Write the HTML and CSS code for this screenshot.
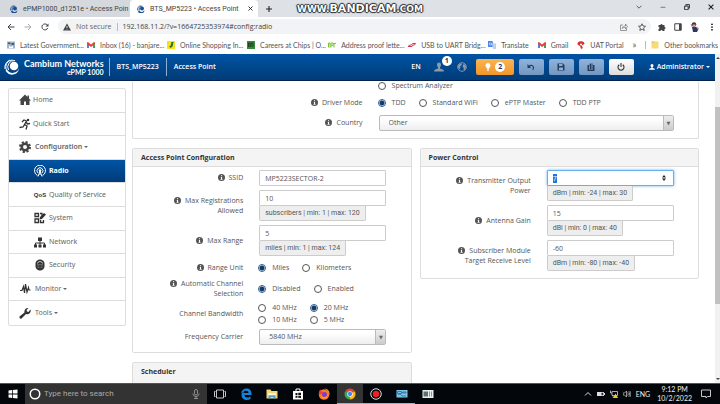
FILE: index.html
```html
<!doctype html>
<html lang="en">
<head>
<meta charset="utf-8">
<meta name="viewport" content="width=device-width">
<title>BTS_MP5223 • Access Point</title>
<link rel="stylesheet" href="styles.css">
</head>
<body>
<svg class="defs" aria-hidden="true">
  <symbol id="info" viewBox="0 0 14 14"><circle cx="7" cy="7" r="7" fill="#555"/><path d="M5.4 5.8h2.8v4.4h1v1.3H5v-1.3h1V7h-.6zM6 2.4h2.2v2H6z" fill="#fff"/></symbol>
  <symbol id="cam" viewBox="0 0 16 16"><path d="M4 11a6 6 0 0 0 11-2 7 7 0 0 1-12 5 8 8 0 0 0 12-2A7 7 0 0 1 2 13z" fill="#1a4f94"/><circle cx="10" cy="7" r="4" fill="#1a4f94"/><path d="M1.500 11a8 8 0 0 1 6-9.500M4.500 11a7 7 0 0 1 6-9" fill="none" stroke="#1a4f94" stroke-width="1.800"/></symbol>
  <symbol id="gm" viewBox="0 0 16 12"><path d="M0 12V1l4 3v8z" fill="#4285f4"/><path d="M16 12V1l-4 3v8z" fill="#34a853"/><path d="M0 1l2-1 6 5 6-5 2 1v3L8 10 0 4z" fill="#ea4335"/></symbol>
  <symbol id="x" viewBox="0 0 10 10"><path d="M1 1l8 8M9 1L1 9" stroke="#222" stroke-width="1.800"/></symbol>
</svg>

<div class="tabs">
  <div class="tab"><svg class="i8"><use href="#cam"/></svg><span class="ttl">ePMP1000_d1251e • Access Poin</span><button aria-label="Close tab"><svg class="i5"><use href="#x"/></svg></button></div>
  <div class="tab on"><svg class="i8"><use href="#cam"/></svg><span class="ttl">BTS_MP5223 • Access Point</span><button aria-label="Close tab"><svg class="i5"><use href="#x"/></svg></button></div>
  <button class="plus" aria-label="New tab"><svg class="i6" viewBox="0 0 10 10"><path d="M5 0v10M0 5h10" stroke="#222" stroke-width="1.800"/></svg></button>
  <div class="win">
    <button aria-label="Search tabs"><svg class="i6" viewBox="0 0 10 10"><path d="M1 3l4 4 4-4" fill="none" stroke="#444" stroke-width="1.400"/></svg></button>
    <button aria-label="Minimize"><svg class="i6" viewBox="0 0 10 10"><path d="M1 5.500h8" stroke="#555" stroke-width="1.200"/></svg></button>
    <button aria-label="Restore"><svg class="i6" viewBox="0 0 10 10"><path d="M1 3.500h6v6H1zM3 3V1h6v6H7.500" fill="none" stroke="#222" stroke-width="1.500"/></svg></button>
    <button aria-label="Close"><svg class="i6"><use href="#x"/></svg></button>
  </div>
  <div class="mark">www.<b>BANDICAM</b>.com</div>
</div>

<div class="tools">
  <button aria-label="Back"><svg class="i8" viewBox="0 0 16 16"><path d="M15 8H2M8 2L2 8l6 6" fill="none" stroke="#444" stroke-width="2"/></svg></button>
  <button aria-label="Forward"><svg class="i8" viewBox="0 0 16 16"><path d="M1 8h13M8 2l6 6-6 6" fill="none" stroke="#aaa" stroke-width="2"/></svg></button>
  <button aria-label="Reload"><svg class="i8" viewBox="0 0 16 16"><path d="M13.500 10A6 6 0 1 1 12.500 4" fill="none" stroke="#444" stroke-width="2"/><path d="M15 1v6H9z" fill="#444"/></svg></button>
  <div class="omni">
    <svg class="i8" viewBox="0 0 16 16"><path d="M8 1l8 14H0z" fill="#444"/><path d="M7.200 6h1.600v4H7.200zM7.200 11.500h1.600V13H7.200z" fill="#fff"/></svg>
    <span class="ns">Not secure</span><span class="bar"></span>
    <input class="url" aria-label="Address" value="192.168.11.2/?v=1664725353974#config:radio">
    <button aria-label="Share"><svg class="i8" viewBox="0 0 16 16"><path d="M6 4H1v11h12v-4M4 11c1-4 4-5 7-5V2l4 5-4 5V9c-3 0-5 0-7 2z" fill="none" stroke="#666" stroke-width="1.300"/></svg></button>
    <button aria-label="Bookmark"><svg class="i8" viewBox="0 0 16 16"><path d="M8 1.500l2 4.500 5 .5-3.700 3.300L12.400 15 8 12.200 3.600 15l1.100-5.200L1 6.500 6 6z" fill="none" stroke="#333" stroke-width="1.500"/></svg></button>
  </div>
  <div class="ext">
    <button aria-label="Extensions"><svg class="i8" viewBox="0 0 16 16"><path d="M1 4h4a2 2 0 1 1 4 0h4v4a2 2 0 1 1 0 4v4H9a2 2 0 1 0-4 0H1v-4a2 2 0 1 0 0-4z" fill="#444"/></svg></button>
    <button aria-label="Side panel"><svg class="i8" viewBox="0 0 16 16"><path d="M1.500 1.500h13v13h-13z" fill="none" stroke="#444" stroke-width="2"/><path d="M10 2h4v12h-4z" fill="#444"/></svg></button>
    <button aria-label="Profile"><svg class="i10" viewBox="0 0 20 20"><circle cx="8" cy="5" r="4.500" fill="#433"/><path d="M5 5h6v4H6z" fill="#d9a08c"/><path d="M4 10h9l4 4-3 6H6z" fill="#2b3566"/><path d="M12 9l6 3-2 4z" fill="#c98"/><path d="M1 3l4 3-1 5z" fill="#b57"/></svg></button>
    <button aria-label="Menu"><svg class="i8" viewBox="0 0 16 16"><circle cx="8" cy="2.500" r="1.700"/><circle cx="8" cy="8" r="1.700"/><circle cx="8" cy="13.500" r="1.700"/></svg></button>
  </div>
</div>

<nav class="marks">
  <a href="#" class="cut"><svg class="i8" viewBox="0 0 16 16"><path d="M0 1h16v14H0z" fill="#9eb2c8"/><path d="M2 3h5v3H2zM9 4h5v4H9z" fill="#445a7c"/><path d="M4 9l4 3 4-3v5H4z" fill="#fff"/></svg><span>Latest Government...</span></a>
  <a href="#" class="cut"><svg class="i8"><use href="#gm"/></svg><span>Inbox (16) - banjare...</span></a>
  <a href="#" class="cut"><svg class="i8" viewBox="0 0 16 16"><path d="M0 0h16v16H0z" fill="#f5e11c"/><path d="M9 2l-2 8H4l3 4 4-3 2-9z" fill="#26702e"/></svg><span>Online Shopping In...</span></a>
  <a href="#" class="cut"><svg class="i8" viewBox="0 0 16 16"><path d="M0 0h16v16H0z" fill="#37883b"/><path d="M3 12V4h3v8M8 12V4h4v8" fill="none" stroke="#10330f" stroke-width="1.500"/></svg><span>Careers at Chips | O...</span></a>
  <a href="#" class="cut"><svg class="i8" viewBox="0 0 16 16"><path d="M1 13V4h3v9M6 13V4h4v5H7M12 4v9M11 5h5" fill="none" stroke="#7dc52c" stroke-width="2"/></svg><span>Address proof lette...</span></a>
  <a href="#" class="cut"><svg class="i8" viewBox="0 0 16 16"><path d="M0 11l4-3h3l2-3h6l-2 3h-3l-2 3z" fill="none" stroke="#c32a35" stroke-width="1.800"/></svg><span>USB to UART Bridg...</span></a>
  <a href="#"><svg class="i8" viewBox="0 0 16 16"><path d="M0 0h9l3 12H0z" fill="#4a86e8"/><path d="M8 5h8v11H10z" fill="#c3cfe4"/><path d="M3 4h4v4H3z" fill="none" stroke="#fff"/></svg>Translate</a>
  <a href="#"><svg class="i8"><use href="#gm"/></svg>Gmail</a>
  <a href="#"><svg class="i8" viewBox="0 0 16 16"><path d="M1 7a7 6 0 0 1 14-1L9 9l3 5-4 2-2-6z" fill="#d32f2f"/><circle cx="8" cy="7" r="2" fill="#fff"/></svg>UAT Portal</a>
  <button class="more" aria-label="More bookmarks">»</button><span class="bar"></span>
  <a href="#" class="other"><svg class="i8" viewBox="0 0 16 16"><path d="M1 1h14v14H1z" fill="#f7d978"/><path d="M1 1h6v2H1z" fill="#e6bd4d"/></svg>Other bookmarks</a>
</nav>

<div class="page">
<div class="view">
<header class="top">
  <a class="logo" href="#">
    <svg class="i16" viewBox="0 0 32 32"><circle cx="20" cy="14" r="8.500" fill="#fff"/><path d="M6 21a13 13 0 0 0 24-3 14 14 0 0 1-25 8l-2-3z" fill="#fff"/><path d="M22 3A13 13 0 0 0 9 22M17 2A14 14 0 0 0 5 22M12 2A16 16 0 0 0 2 20" fill="none" stroke="#fff" stroke-width="2"/></svg>
    <span class="brand">Cambium Networks<small>ePMP 1000</small></span>
  </a>
  <span class="cell">BTS_MP5223</span>
  <span class="cell">Access Point</span>
  <div class="right">
    <a href="#" class="lang">EN</a>
    <a href="#" class="user" aria-label="Users"><svg class="i10" viewBox="0 0 20 20"><path d="M6 5a4 4 0 0 1 8 0c0 3-1 4-2 6v2c4 1 8 2 8 6H0c0-4 4-5 8-6v-2C7 9 6 8 6 5z" fill="#8c9aab"/></svg><span class="badge">1</span></a>
    <a href="#" class="globe" aria-label="Internet"><svg class="i10" viewBox="0 0 20 20"><circle cx="10" cy="10" r="8.500" fill="none" stroke="#8c9aab" stroke-width="2"/><path d="M2 8l3-4 5-1-1 4-3 1 1 3-2 3-3-3zM13 4l4 2 1 5-3 5-2-1v-4l-2-2z" fill="#8c9aab"/></svg></a>
    <button class="btn warn" aria-label="Notifications"><svg class="i8" viewBox="0 0 16 16"><path d="M8 0a5 5 0 0 1 3 9l-1 3H6L5 9a5 5 0 0 1 3-9zM6 13h4v1l-1 2H7l-1-2z" fill="#fff"/></svg><span class="num">2</span></button>
    <button class="btn" aria-label="Undo"><svg class="i8" viewBox="0 0 16 16"><path d="M4 7c4-4 9-2 9 2 0 2-1 4-2 4" fill="none" stroke="#253d5d" stroke-width="2.400"/><path d="M1 2v8h7z" fill="#253d5d"/></svg></button>
    <button class="btn" aria-label="Save"><svg class="i8" viewBox="0 0 16 16"><path d="M1 1h11l3 3v11H1z" fill="#253d5d"/><path d="M4 2h7v4H4zM4 9h8v5H4z" fill="#8eb0d6"/></svg></button>
    <button class="btn" aria-label="Reset"><svg class="i8" viewBox="0 0 16 16"><path d="M1 4h3v9h8V4h3v12H1zM5 3l3-3v12H6zM9 1h2v11H9z" fill="#253d5d"/></svg></button>
    <button class="btn pow" aria-label="Reboot"><svg class="i8" viewBox="0 0 16 16"><path d="M4.500 3.500a6 6 0 1 0 7 0M8 0v8" fill="none" stroke="#333" stroke-width="2.200"/></svg></button>
    <a href="#" class="admin"><svg class="i6" viewBox="0 0 20 20"><path d="M5 5a5 5 0 0 1 10 0c0 3-1 5-3 6v2c4 1 8 2 8 6H0c0-4 4-5 8-6v-2C6 10 5 8 5 5z" fill="#fff"/></svg>Administrator<i class="caret"></i></a>
  </div>
</header>

<div class="cols">
<nav class="side">
  <a href="#"><svg class="i12" viewBox="0 0 24 24"><path d="M12 1L0 13h3v9h7v-7h4v7h7v-9h3l-4-4V3h-3v3z" fill="#444"/></svg>Home</a>
  <a href="#"><svg class="i12" viewBox="0 0 24 24"><circle cx="18" cy="4" r="2.500" fill="#333"/><path d="M6 8l4-4 5 2-4 7 5 3-2 7M11 13l-3 5-7 1M14 8l3 4 5-1" fill="none" stroke="#333" stroke-width="2.600"/></svg>Quick Start</a>
  <a href="#" class="grp"><svg class="i12" viewBox="0 0 24 24"><circle cx="12" cy="12" r="6.500" fill="none" stroke="#444" stroke-width="5"/><circle cx="12" cy="12" r="10" fill="none" stroke="#444" stroke-width="4" stroke-dasharray="4.200 3.654"/></svg><b>Configuration</b><i class="caret"></i></a>
  <a href="#" class="sub on"><svg class="i12" viewBox="0 0 24 24"><g fill="none" stroke="#fff" stroke-width="2"><path d="M7 21a11 11 0 1 1 10 0M8 16a6 6 0 1 1 8 0M12 12L8 23M12 12l4 11M10 18h4"/></g><circle cx="12" cy="11" r="2.500" fill="#fff"/></svg>Radio</a>
  <a href="#" class="sub"><strong class="qos">QoS</strong>Quality of Service</a>
  <a href="#" class="sub"><svg class="i12" viewBox="0 0 24 24"><path d="M2 3h7v6H2zM2 14h7v7H2zM12 3h4v5M13 16v5h6v-5" fill="none" stroke="#333" stroke-width="2.600"/><path d="M11 15l1-5 8-8 4 3-8 9z" fill="#333"/></svg>System</a>
  <a href="#" class="sub"><svg class="i12" viewBox="0 0 24 24"><path d="M8 3h8v7H8zM0 17h6v6H0zM9 17h6v6H9zM18 17h6v6h-6z" fill="#333"/><path d="M12 9v8M3 18v-4h18v4" fill="none" stroke="#333" stroke-width="2"/></svg>Network</a>
  <a href="#" class="sub"><svg class="i12" viewBox="0 0 24 24"><path d="M3 9a9 8 0 0 1 18 0v6a9 8 0 0 1-18 0z" fill="#333"/><path d="M7 9a5 4 0 0 1 10 0" fill="none" stroke="#eee" stroke-width="1.500"/><path d="M6 11h12M6 14h5m2 0h5M7 17h4m2 0h4" stroke="#999" stroke-width="1"/></svg>Security</a>
  <a href="#" class="grp"><svg class="i12" viewBox="0 0 24 24"><path d="M2 15h4l3-8 2 13 2-18 3 16 3-9 1 5h3" fill="none" stroke="#333" stroke-width="2.400"/></svg>Monitor<i class="caret"></i></a>
  <a href="#" class="grp"><svg class="i12" viewBox="0 0 24 24"><path d="M23 5a7 7 0 0 1-9 9L5 23c-2 2-5-1-4-4l10-8c-1-6 3-10 8-9l-4 4 1 3 3 1z" fill="#333"/></svg>Tools<i class="caret"></i></a>
</nav>

<form class="main">
  <section class="card wide">
    <div class="row">
      <span></span>
      <div class="opts"><label><input type="radio" name="mode">Spectrum Analyzer</label></div>
    </div>
    <div class="row tall">
      <span class="lab"><svg class="i7"><use href="#info"/></svg>Driver Mode</span>
      <div class="opts">
        <label><input type="radio" name="driver" checked>TDD</label>
        <label><input type="radio" name="driver">Standard WiFi</label>
        <label><input type="radio" name="driver">ePTP Master</label>
        <label><input type="radio" name="driver">TDD PTP</label>
      </div>
    </div>
    <div class="row">
      <label class="lab" for="country"><svg class="i7"><use href="#info"/></svg>Country</label>
      <div class="sel"><select id="country"><option>Other</option></select></div>
    </div>
  </section>

  <section class="card">
    <h2>Access Point Configuration</h2>
    <div class="body">
      <div class="row">
        <label class="lab" for="ssid"><svg class="i7"><use href="#info"/></svg>SSID</label>
        <div><input class="txt" id="ssid" value="MP5223SECTOR-2"></div>
      </div>
      <div class="row">
        <label class="lab" for="maxreg"><svg class="i7"><use href="#info"/></svg>Max Registrations<br>Allowed</label>
        <div><input class="txt" id="maxreg" value="10"><span class="hint">subscribers | min: 1 | max: 120</span></div>
      </div>
      <div class="row">
        <label class="lab" for="range"><svg class="i7"><use href="#info"/></svg>Max Range</label>
        <div><input class="txt" id="range" value="5"><span class="hint">miles | min: 1 | max: 124</span></div>
      </div>
      <div class="row mid">
        <span class="lab"><svg class="i7"><use href="#info"/></svg>Range Unit</span>
        <div class="opts">
          <label><input type="radio" name="unit" checked>Miles</label>
          <label><input type="radio" name="unit">Kilometers</label>
        </div>
      </div>
      <div class="row">
        <span class="lab"><svg class="i7"><use href="#info"/></svg>Automatic Channel<br>Selection</span>
        <div class="opts">
          <label><input type="radio" name="acs" checked>Disabled</label>
          <label><input type="radio" name="acs">Enabled</label>
        </div>
      </div>
      <div class="row">
        <span class="lab">Channel Bandwidth</span>
        <div class="opts pairs">
          <label><input type="radio" name="bw">40 MHz</label>
          <label><input type="radio" name="bw" checked>20 MHz</label>
          <label><input type="radio" name="bw">10 MHz</label>
          <label><input type="radio" name="bw">5 MHz</label>
        </div>
      </div>
      <div class="row">
        <label class="lab" for="freq">Frequency Carrier</label>
        <div class="sel"><select id="freq"><option>5840 MHz</option></select></div>
      </div>
    </div>
  </section>

  <section class="card">
    <h2>Power Control</h2>
    <div class="body">
      <div class="row">
        <label class="lab" for="power"><svg class="i7"><use href="#info"/></svg>Transmitter Output<br>Power</label>
        <div class="spin"><input class="txt act" id="power" type="number" min="-24" max="30" value="7"><svg class="i6" viewBox="0 0 12 12"><path d="M6 0l4 5H2zM6 12l4-5H2z" fill="#222"/></svg><span class="hint">dBm | min: -24 | max: 30</span></div>
      </div>
      <div class="row">
        <label class="lab" for="gain"><svg class="i7"><use href="#info"/></svg>Antenna Gain</label>
        <div><input class="txt" id="gain" value="15"><span class="hint">dBi | min: 0 | max: 40</span></div>
      </div>
      <div class="row">
        <label class="lab" for="level"><svg class="i7"><use href="#info"/></svg>Subscriber Module<br>Target Receive Level</label>
        <div><input class="txt" id="level" value="-60"><span class="hint">dBm | min: -80 | max: -40</span></div>
      </div>
    </div>
  </section>

  <section class="card sched"><h2>Scheduler</h2></section>
</form>
</div>
</div>
<div class="scroll"><i class="up"></i><div class="thumb"></div><i class="dn"></i></div>
</div>

<footer class="task">
  <button class="start" aria-label="Start"><svg class="i10" viewBox="0 0 20 20"><path d="M1 3l7-1v7H1zM9.500 2L19 1v8H9.500zM1 11h7v7l-7-1zM9.500 11H19v8l-9.500-1z" fill="#fff"/></svg></button>
  <div class="find">
    <svg class="i12" viewBox="0 0 24 24"><circle cx="12" cy="12" r="9.500" fill="none" stroke="#fff" stroke-width="3"/></svg>
    <input aria-label="Search" placeholder="Type here to search">
    <svg class="i10" viewBox="0 0 20 20"><rect x="7" y="1" width="6" height="11" rx="3" fill="none" stroke="#aaa" stroke-width="1.500"/><path d="M4 9c0 8 12 8 12 0M10 15v4M6 19h8" fill="none" stroke="#aaa" stroke-width="1.500"/></svg>
  </div>
  <div class="apps">
    <button aria-label="Task view"><svg class="i12" viewBox="0 0 24 24"><path d="M5 4h14v16H5zM3 7H1v10h2M21 7h2v10h-2" fill="none" stroke="#ddd" stroke-width="1.800"/></svg></button>
    <button aria-label="Edge"><svg class="i12" viewBox="0 0 24 24"><path d="M2 11C3 4 8 1 13 1c6 0 10 4 10 10v3H9c0 6 8 6 12 3v5c-7 4-18 2-18-8 0-4 3-7 6-8-1 1-2 3-2 4h10c0-6-10-6-15 1z" fill="#1683d8"/></svg></button>
    <button aria-label="Explorer"><svg class="i12" viewBox="0 0 24 24"><path d="M1 3h8l2 3h12v15H1z" fill="#f4d67a"/><path d="M4 10h16v4H4z" fill="#fff3c4"/><path d="M5 21v-6h14v6h-4v-3H9v3z" fill="#4b9fd8"/></svg></button>
    <button aria-label="Store"><svg class="i12" viewBox="0 0 24 24"><path d="M2 6h20v17H2z" fill="#fff"/><path d="M8 6V2h8v4" fill="none" stroke="#fff" stroke-width="2"/><path d="M7 10h4v4H7zM12.500 9.500H18V14h-5.500zM7 15.500h4v4H7zM12.500 15.500H18V20l-5.500-.5z" fill="#111"/></svg></button>
    <button aria-label="Firefox"><svg class="i12" viewBox="0 0 24 24"><circle cx="12" cy="13" r="10.500" fill="#ff7a1f"/><path d="M13 1c6 3 10 7 9 14a10 10 0 0 0-9-14z" fill="#ffc629"/><path d="M2 14C1 8 3 5 5 3l2 4 4 1-2 3z" fill="#f2443b"/><circle cx="13" cy="13" r="5" fill="#7a3ed1"/><path d="M6 15c3 6 11 5 13-1 0 7-12 10-13 1z" fill="#ffb52b"/></svg></button>
    <button class="cur run" aria-label="Chrome"><svg class="i12" viewBox="0 0 24 24"><path d="M12 12L2.500 6.500A11 11 0 0 1 21.500 6.500z" fill="#e94335"/><path d="M12 12l9.500-5.500A11 11 0 0 1 12 23z" fill="#fbbc05"/><path d="M12 12v11A11 11 0 0 1 2.500 6.500z" fill="#34a853"/><path d="M12 6.500h9.500L12 12z" fill="#e94335"/><circle cx="12" cy="12" r="5.500" fill="#fff"/><circle cx="12" cy="12" r="4.300" fill="#4285f4"/></svg></button>
    <button class="run" aria-label="Bandicam"><svg class="i12" viewBox="0 0 24 24"><circle cx="12" cy="12" r="10.500" fill="none" stroke="#ddd" stroke-width="2"/><circle cx="12" cy="12" r="6.500" fill="#f01f24"/></svg></button>
    <button class="run" aria-label="Network tool"><svg class="i12" viewBox="0 0 24 24"><path d="M1 4h22v15H1z" fill="#7cc5ea"/><path d="M3 7h8v4H3zM13 8h7v2h-7zM4 14l4-2 4 4h8" fill="none" stroke="#24618b" stroke-width="1.500"/></svg></button>
    <button aria-label="Control panel"><svg class="i12" viewBox="0 0 24 24"><path d="M1 4h22v16H1z" fill="#e8eeee"/><path d="M3 7h9v10H3z" fill="#58736c"/><path d="M15 7v10M19 7v10" stroke="#7c9aa6" stroke-width="2"/></svg></button>
  </div>
  <div class="tray">
    <svg class="i8" viewBox="0 0 16 16"><path d="M2 11l6-6 6 6" fill="none" stroke="#ddd" stroke-width="2"/></svg>
    <svg class="i8" viewBox="0 0 16 16"><path d="M0 4h14v8H0zM14 6h2v4h-2z" fill="#ddd"/><path d="M9 5.500h3.500v5H9z" fill="#222"/></svg>
    <svg class="i8" viewBox="0 0 16 16"><path d="M1 1v5h3M4 3h11v8H4zM5 14h5" fill="none" stroke="#ddd" stroke-width="1.500"/><path d="M11 7l5 9H6z" fill="#f8c62d"/></svg>
    <svg class="i8" viewBox="0 0 16 16"><path d="M0 6h3l4-4v12l-4-4H0zM9 5c2 2 2 4 0 6M11 3c3 3 3 7 0 10M13.500 2c3 4 3 8 0 12" fill="none" stroke="#ddd" stroke-width="1.300"/></svg>
    <span>ENG</span>
    <time>9:12 PM<br>10/2/2022</time>
    <svg class="i10" viewBox="0 0 20 20"><path d="M1 2h18v13h-6l-3 3v-3H1z" fill="none" stroke="#ddd" stroke-width="1.800"/></svg>
  </div>
</footer>
<script>
document.getElementById("power").focus();
document.getElementById("power").select();
</script>
</body>
</html>
```
FILE: styles.css
```css
*{box-sizing:border-box}
html,body{height:100%}
body{margin:0; display:flex; flex-direction:column; overflow:hidden; background:#fff; color:#555; font:7px/10px "Open Sans","Noto Sans",sans-serif}
a{color:inherit; text-decoration:none}
button{margin:0; padding:0; border:0; background:none; font:inherit; color:inherit; display:flex; align-items:center; justify-content:center}
input,select{font:inherit; color:inherit; margin:0}
svg{display:block; flex:none}
.defs{position:absolute; width:0; height:0}
.i5{width:5px; height:5px}
.i6{width:6px; height:6px}
.i7{width:7px; height:7px}
.i8{width:8px; height:8px}
.i10{width:10px; height:10px}
.i12{width:12px; height:12px}
.i16{width:16px; height:16px}
.bar{width:1px; height:8px; background:#bbb}
.caret{display:inline-block; border:2px solid transparent; border-top-color:currentColor; border-bottom:0}

/* browser */
.tabs,.find,.hint{font-family:Roboto,sans-serif}
.marks,.tray{font-family:Lato,sans-serif}
.tabs{position:relative; display:flex; align-items:stretch; height:17px; flex:none; background:#dee1e6; color:#444}
.tab{display:flex; align-items:center; gap:5px; width:130px; padding:0 5px 0 10px; background:#d5d8dd}
.tab.on{width:128px; padding-left:7px; background:#fff; border-radius:4px 4px 0 0}
.ttl{flex:1; white-space:nowrap}
.plus{width:22px}
.win{display:flex; gap:18px; margin-left:auto; padding-right:6px; padding-bottom:3px}
.mark{position:absolute; left:50%; top:2px; transform:translateX(-50%); font:bold 9px/13px "DejaVu Sans",sans-serif; color:#fff; text-transform:uppercase; text-shadow:0 0 1px #222,0 0 1px #222,1px 0 1px #333,-1px 0 1px #333,0 1px 1px #333,0 -1px 1px #333}
.mark b{font-size:11px}
.tools{display:flex; align-items:center; gap:9px; height:19px; flex:none; padding:0 4px 0 7px; background:#fff}
.omni{flex:1; display:flex; align-items:center; gap:5px; height:15px; padding:0 5px; border-radius:8px; background:#f1f3f4}
.omni button{margin-left:5px}
.ns{color:#666}
.url{flex:1; min-width:0; border:0; padding:0; background:none; color:#444; outline:0}
.ext{display:flex; align-items:center; gap:8px; margin-left:-2px}
.marks{display:flex; align-items:center; gap:9px; height:18px; flex:none; padding:0 2px 0 7px; white-space:nowrap}
.marks a{display:flex; align-items:center; gap:5px}
.marks .cut{min-width:71px}
.more{margin-left:auto; font-size:9px}
.marks .bar{margin-right:-4px}

.page{flex:1; min-height:0; display:flex}
.view{flex:1; min-width:0; overflow:hidden}
.scroll{width:5px; display:flex; flex-direction:column; justify-content:space-between; align-items:center; padding:3px 0; background:#f1f1f1}
.thumb{width:100%; height:61%; margin-bottom:26px; background:#c1c1c1}
.scroll i{border:2px solid transparent}
.scroll .up{border-bottom-color:#444; border-top:0}
.scroll .dn{border-top-color:#444; border-bottom:0}

/* app header */
.top{display:flex; align-items:center; height:27px; padding:0 5px 0 4px; background:linear-gradient(#0054a4,#003b78); border-bottom:1px solid #00224d; color:#fff; font-weight:600}
.logo{display:flex; align-items:center; gap:4px; padding-right:5px}
.brand{font:bold 9px/9px Lato,sans-serif; text-align:right}
.brand small{display:block; font-size:7px; line-height:8px}
.cell{border-left:1px solid #8fb0d4; padding:4px 7px}
.right{display:flex; align-items:center; gap:5px; margin-left:auto}
.lang,.user{margin-right:8px}
.user{position:relative}
.badge,.num{min-width:10px; height:10px; border-radius:5px; background:#fff; color:#1b3a63; text-align:center; font-weight:700}
.badge{position:absolute; left:8px; top:-6px}
.globe{margin-right:4px}
.btn{width:25px; height:16px; border-radius:2px; background:linear-gradient(#8fb3da,#7397c0)}
.warn{width:38px; gap:3px; background:linear-gradient(#fbb450,#f2962a)}
.pow{background:linear-gradient(#fff,#ddd)}
.admin{display:flex; align-items:center; gap:2px; margin-left:10px}

.cols{display:grid; grid-template-columns:118px minmax(0,1fr); gap:6px; align-items:start; padding:0 16px 0 8px}
.side{display:grid; grid-auto-rows:1fr; min-height:238px; margin-top:7px; border:1px solid #ddd; border-radius:2px; color:#666; font-family:"Noto Sans",sans-serif}
.side a{display:flex; align-items:center; gap:2px; padding-left:10px; border-bottom:1px solid #ddd}
.side a:last-child{border-bottom:0}
.side .grp svg{margin-right:2px}
.side .sub{gap:3px; padding-left:25px}
.side b{font-weight:600}
.side .on{background:linear-gradient(#0054a4,#003b78); color:#fff; font-weight:700}
.qos{width:12px; color:#333; font:bold 6px/10px "Liberation Sans",sans-serif; display:flex; justify-content:center}

.main{display:grid; grid-template-columns:1fr 1fr; gap:9px 8px; align-items:start}
.card{border:1px solid #ddd; border-radius:2px}
.card h2{margin:0; padding:4px 8px 3px; border-bottom:1px solid #ddd; background:#f4f4f4; color:#333; font-size:7px; line-height:10px; font-weight:700}
.wide{grid-column:1/-1; border-top:0; padding-bottom:7px}
.body{display:grid; gap:4px; padding:3px 0 7px}
.row{display:grid; grid-template-columns:110fr 127fr; column-gap:16px; align-items:center; padding-right:24px}
.wide .row{grid-template-columns:230fr 296fr}
.row.mid{min-height:15px}
.row.tall{min-height:24px}
.lab{justify-self:end; text-align:right}
.lab svg{display:inline-block; vertical-align:-1px; margin-right:4px}
.opts{display:flex; gap:13px; margin-left:-1px}
.opts label{display:flex; align-items:center; gap:6px}
.pairs{display:grid; grid-template-columns:max-content max-content; gap:2px 13px}
input[type=radio]{appearance:none; width:8px; height:8px; border:1px solid #555; border-radius:50%; background:#fff}
input[type=radio]:checked{border-color:#2b5a8c; background:radial-gradient(#123a6b 0 2px,#fff 3px)}
.txt{display:block; width:100%; height:16px; padding:0 5px; border:1px solid #ccc; border-radius:1px; background:#fff}
.act{outline:0; border-color:#66afe9; box-shadow:0 0 3px #66afe9; appearance:textfield}
.act::-webkit-inner-spin-button{display:none}
.act::selection{background:#1e78d7; color:#fff}
.spin{position:relative}
.spin svg{position:absolute; right:7px; top:5px}
.hint{display:inline-block; height:15px; padding:0 5px; border:1px solid #ccc; border-top:0; border-radius:0 0 2px 2px; background:#eee; line-height:14px; vertical-align:top}
.sel{position:relative; display:flex}
.sel select{flex:1; height:16px; padding:0 9px; appearance:none; border:1px solid #bbb; border-radius:2px; background:linear-gradient(#fff 20%,#eee)}
.sel::after{content:"▼"; position:absolute; right:1px; top:1px; bottom:1px; width:9px; border-left:1px solid #bbb; background:linear-gradient(#eee,#ccc); font:5px/14px "DejaVu Sans",sans-serif; text-align:center; color:#666; pointer-events:none}
.sched h2{padding-bottom:24px}

/* taskbar */
.task{display:flex; height:21px; flex:none; border-top:1px solid #555; background:#03060a; color:#eee}
.start{width:25px}
.find{display:flex; align-items:center; gap:3px; width:182px; padding:0 6px 0 4px; background:#333}
.find input{flex:1; min-width:0; border:0; padding:0; background:none; font-size:8px; outline:0}
.find input::placeholder{color:#aaa}
.apps{display:flex}
.apps button{width:26px}
.apps .run{border-bottom:1px solid #76b9ed}
.apps .cur{background:#333}
.tray{display:flex; align-items:center; gap:5px; margin-left:auto; padding-right:9px}
.tray time{margin:0 4px 0 2px; line-height:9px; text-align:center}
```
